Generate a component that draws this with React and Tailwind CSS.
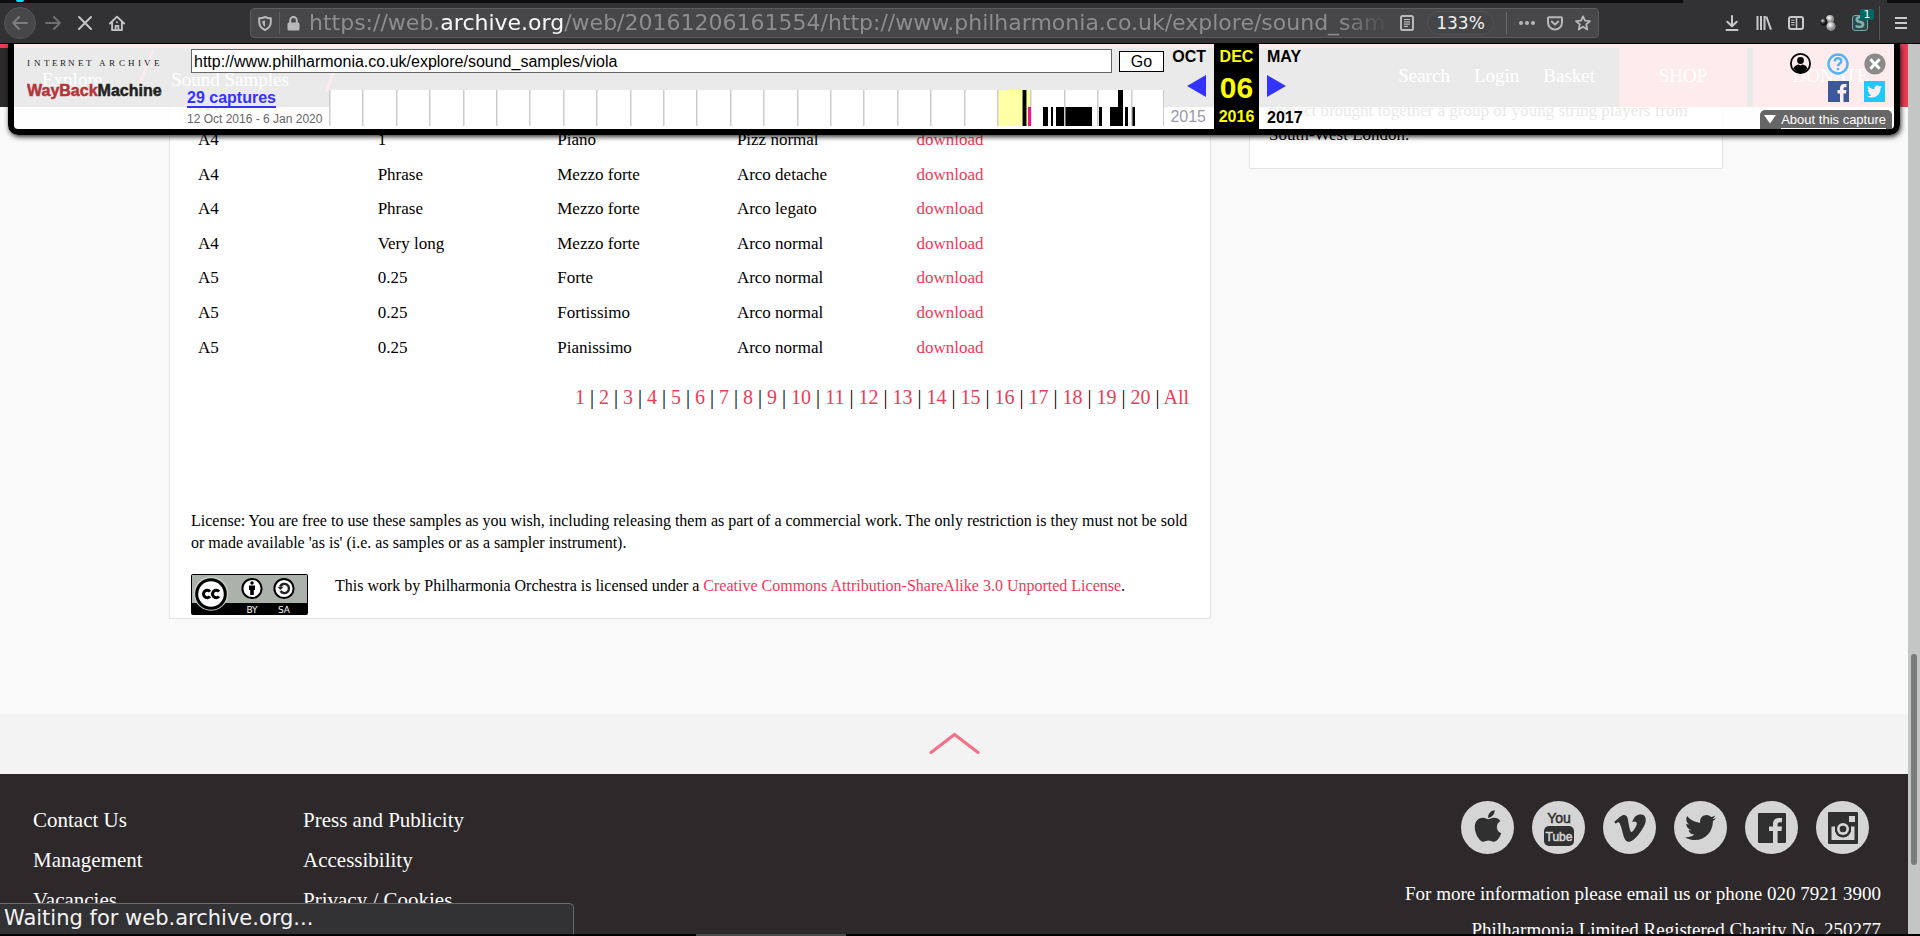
import React from "react";
import { FaApple, FaVimeoV, FaTwitter } from "react-icons/fa";

const rows = [
  ["A4", "", "", "", ""],
  ["A4", "1", "Piano", "Pizz normal", "download"],
  ["A4", "Phrase", "Mezzo forte", "Arco detache", "download"],
  ["A4", "Phrase", "Mezzo forte", "Arco legato", "download"],
  ["A4", "Very long", "Mezzo forte", "Arco normal", "download"],
  ["A5", "0.25", "Forte", "Arco normal", "download"],
  ["A5", "0.25", "Fortissimo", "Arco normal", "download"],
  ["A5", "0.25", "Pianissimo", "Arco normal", "download"],
];

const pages = [...Array.from({ length: 20 }, (_, i) => String(i + 1)), "All"];

function IconButton({ label, className = "", children }) {
  return (
    <button type="button" aria-label={label} className={`flex items-center justify-center ${className}`}>
      {children}
    </button>
  );
}

function BrowserBar() {
  return (
    <div className="relative h-[44px] shrink-0 border-b border-black bg-[#323234] font-['DejaVu_Sans',sans-serif]">
      <div className="flex h-[3px] bg-[#0c0c0d]">
        <span className="ml-4 h-[2px] w-2 rounded-b-full bg-[#00e5f5]" />
        <span className="mr-[33px] ml-auto h-[3px] w-[204px] bg-[#323234]" />
      </div>
      <div className="flex h-10 items-center text-[#b8b8ba]">
        <IconButton label="Back" className="ml-1 size-8 rounded-full border border-[#565658] bg-[#474749] text-[#7d7d7f]">
          <svg width="16" height="14" viewBox="0 0 16 14" fill="none" stroke="currentColor" strokeWidth="2" strokeLinecap="round" strokeLinejoin="round">
            <path d="M15 7H1.500M7 1L1.200 7L7 13" />
          </svg>
        </IconButton>
        <IconButton label="Forward" className="ml-[9px] w-4 text-[#6f6f71]">
          <svg width="16" height="14" viewBox="0 0 16 14" fill="none" stroke="currentColor" strokeWidth="2" strokeLinecap="round" strokeLinejoin="round">
            <path d="M1 7H14.500M9 1L14.800 7L9 13" />
          </svg>
        </IconButton>
        <IconButton label="Stop" className="ml-4 w-4 text-[#c4c4c6]">
          <svg width="16" height="16" viewBox="0 0 16 16" fill="none" stroke="currentColor" strokeWidth="2" strokeLinecap="round">
            <path d="M2 2L14 14M14 2L2 14" />
          </svg>
        </IconButton>
        <IconButton label="Home" className="ml-4 w-4 text-[#c4c4c6]">
          <svg width="17" height="17" viewBox="0 0 17 17" fill="none" stroke="currentColor" strokeWidth="2" strokeLinecap="round" strokeLinejoin="round">
            <path d="M1 8.500L8.500 1.200L16 8.500M3.300 7V15.500H13.700V7" />
            <path d="M7 15V11H10V15" />
            <path d="M8.500 7.200V7.300" />
          </svg>
        </IconButton>

        <div className="ml-[125px] flex h-[30px] w-[1349px] items-center rounded-[4px] border border-[#5c5c5e] bg-[#474749]">
          <svg className="ml-[7px] shrink-0" width="14" height="15" viewBox="0 0 14 15" fill="none" stroke="currentColor" strokeWidth="2" strokeLinejoin="round">
            <path d="M7 1C5 2 3 2.300 1.200 2.300V6C1.200 10 3.500 12.500 7 14C10.500 12.500 12.800 10 12.800 6V2.300C11 2.300 9 2 7 1Z" />
            <path d="M7 4.500V10.800C5 9.500 4.300 8 4.300 5Z" fill="currentColor" stroke="none" />
          </svg>
          <span className="ml-[7px] h-[22px] w-px bg-[#5f5f63]" />
          <svg className="ml-[7px] shrink-0" width="13" height="15" viewBox="0 0 13 15">
            <rect x="0.500" y="6.500" width="12" height="8" rx="1.500" fill="currentColor" />
            <path d="M3.200 7V4.200A3.300 3.300 0 0 1 9.800 4.200V7" fill="none" stroke="currentColor" strokeWidth="2" />
          </svg>
          <div className="ml-[9px] min-w-0 flex-1 overflow-hidden whitespace-nowrap text-[22px] leading-7 text-[#8d8d8f] [mask-image:linear-gradient(to_right,black_calc(100%-48px),transparent)]">
            https://web.<span className="text-[#f9f9fa]">archive.org</span>
            /web/20161206161554/http://www.philharmonia.co.uk/explore/sound_samples/viola
          </div>
          <IconButton label="Reader view" className="ml-3 w-[14px]">
            <svg width="14" height="16" viewBox="0 0 14 16" fill="none" stroke="currentColor" strokeWidth="2">
              <rect x="1" y="1" width="12" height="14" rx="1.500" />
              <path d="M4 4.500H10M4 6.800H10M4 9.100H10M4 11.400H8" strokeWidth="1.200" />
            </svg>
          </IconButton>
          <button type="button" className="ml-[13px] h-6 w-[67px] rounded-full border border-[#555557] bg-[#454547] text-[17px] leading-5 text-[#f0f0f1]">
            133%
          </button>
          <span className="ml-3 h-[22px] w-px bg-[#6a6a6e]" />
          <IconButton label="Page actions" className="ml-3 w-4">
            <svg width="16" height="4" viewBox="0 0 16 4" fill="currentColor">
              <circle cx="2" cy="2" r="2" /><circle cx="8" cy="2" r="2" /><circle cx="14" cy="2" r="2" />
            </svg>
          </IconButton>
          <IconButton label="Save to Pocket" className="ml-3 w-4">
            <svg width="16" height="15" viewBox="0 0 16 15" fill="none" stroke="currentColor" strokeWidth="2" strokeLinecap="round" strokeLinejoin="round">
              <path d="M2 1.200H14A1 1 0 0 1 15 2.200V6.500A7 7 0 0 1 1 6.500V2.200A1 1 0 0 1 2 1.200Z" />
              <path d="M4.800 5.500L8 8.600L11.200 5.500" />
            </svg>
          </IconButton>
          <IconButton label="Bookmark" className="mr-[7px] ml-3 w-4">
            <svg width="16" height="16" viewBox="0 0 16 16" fill="none" stroke="currentColor" strokeWidth="1.800" strokeLinejoin="round">
              <path d="M8 1.300L10 5.700L14.900 6.200L11.200 9.400L12.300 14.500L8 11.800L3.700 14.500L4.800 9.400L1.100 6.200L6 5.700Z" />
            </svg>
          </IconButton>
        </div>

        <div className="ml-auto flex h-10 items-center text-[#c9c9cb]">
          <IconButton label="Downloads" className="w-4">
            <svg width="14" height="16" viewBox="0 0 14 16" fill="none" stroke="currentColor" strokeWidth="2" strokeLinecap="round" strokeLinejoin="round">
              <path d="M7 1V11M2.300 6.700L7 11.300L11.700 6.700M1.500 15H12.500" />
            </svg>
          </IconButton>
          <IconButton label="Library" className="ml-4 w-4">
            <svg width="16" height="14" viewBox="0 0 16 14" fill="none" stroke="currentColor" strokeWidth="2">
              <path d="M1.500 0V14M5 0V14M8.500 0V14M10.300 0.500L15 13.600" />
            </svg>
          </IconButton>
          <IconButton label="Sidebars" className="ml-4 w-4">
            <svg width="16" height="14" viewBox="0 0 16 14" fill="none" stroke="currentColor" strokeWidth="2">
              <rect x="1" y="1" width="14" height="12" rx="2" />
              <path d="M8.500 1V13" strokeWidth="1.500" />
              <path d="M3.200 4.200H6.500M3.200 6.500H6.500M3.200 8.800H6.500" strokeWidth="1" />
            </svg>
          </IconButton>
          <IconButton label="Extension" className="ml-4 w-4">
            <svg width="16" height="16" viewBox="0 0 16 16">
              <defs>
                <radialGradient id="ball" cx="0.400" cy="0.350"><stop offset="0" stopColor="#fff" /><stop offset="1" stopColor="#8a8a8a" /></radialGradient>
                <radialGradient id="dark" cx="0.350" cy="0.350"><stop offset="0" stopColor="#eee" /><stop offset="0.500" stopColor="#555" /><stop offset="1" stopColor="#111" /></radialGradient>
              </defs>
              <circle cx="10" cy="4" r="4" fill="url(#ball)" />
              <circle cx="11" cy="11.300" r="4.600" fill="url(#ball)" />
              <circle cx="3.800" cy="6.800" r="3.600" fill="url(#dark)" />
            </svg>
          </IconButton>
          <div className="relative ml-4 flex h-9 w-4 items-center">
            <button type="button" className="flex size-4 items-center justify-center rounded-[3px] border border-[#6fa9a7] bg-[#2f4a4b] text-[15px] leading-none font-bold text-[#7fb3b0]">
              S
            </button>
            <span className="absolute top-1 left-2 h-[11px] w-[14px] rounded-[2px] bg-[#006766] text-center text-[11px] leading-[11px] text-white">1</span>
          </div>
          <span className="ml-[11px] h-[34px] w-px bg-[#57575a]" />
          <IconButton label="Menu" className="mr-[13px] ml-[15px] w-3">
            <svg width="12" height="12" viewBox="0 0 12 12" stroke="currentColor" strokeWidth="2">
              <path d="M0 1H12M0 6H12M0 11H12" />
            </svg>
          </IconButton>
        </div>
      </div>
    </div>
  );
}

function Slash({ className }) {
  return (
    <svg className={`mt-[2px] shrink-0 self-start ${className}`} width="18" height="42" viewBox="0 0 18 42" stroke="#ec3b57" strokeWidth="3">
      <path d="M17 0L1 42" />
    </svg>
  );
}

function SiteHeader() {
  return (
    <header className="absolute inset-x-0 top-0 h-[63px] border-t-4 border-[#ec3b57] bg-[#2d282a] text-[19px] leading-6 text-white">
      <nav className="flex h-[59px] items-center">
        <a href="#explore" className="mt-1 ml-[42px]">Explore</a>
        <Slash className="ml-[34px]" />
        <a href="#samples" className="mt-1 ml-[17px]">Sound Samples</a>
        <Slash className="ml-9" />
        <div className="-mt-1 ml-auto flex gap-6 pr-6">
          <a href="#search">Search</a>
          <a href="#login">Login</a>
          <a href="#basket">Basket</a>
        </div>
        <a href="#shop" className="h-full w-32 bg-[#ec3b57] pt-4 text-center">SHOP</a>
        <a href="#donate" className="ml-[6px] h-full w-[155px] bg-[#ec3b57] pt-4 text-center">DONATE</a>
      </nav>
    </header>
  );
}

const letters = "INTERNET ARCHIVE".split("");
const slots = [0, 7, 17, 25, 33, 41, 51, 59, 67, 72, 82, 92, 101, 111, 117, 127];

function WaybackLogo() {
  return (
    <a href="#wayback" className="flex w-[173px] shrink-0 flex-col pt-[15px] pl-[13px]" aria-label="Internet Archive Wayback Machine">
      <svg width="140" height="52" viewBox="0 0 140 52">
        <g fontFamily="'Liberation Serif', serif" fontSize="9" fill="#222">
          {letters.map((l, i) => (
            <text key={i} x={slots[i]} y="7">{l}</text>
          ))}
        </g>
        <text y="37" fontFamily="'Liberation Sans', sans-serif" fontWeight="700" fontSize="16" fill="#b5343a" stroke="#b5343a" strokeWidth="0.500">
          WayBack<tspan fill="#222" stroke="#222">Machine</tspan>
        </text>
      </svg>
    </a>
  );
}

const bars = [
  [694, 0, 3, 36], [714, 17, 5, 19], [722, 17, 2, 19], [727, 17, 36, 19],
  [770, 17, 3, 19], [781, 17, 13, 19], [789, 0, 5, 36], [796, 17, 3, 19], [803, 17, 3, 19],
];

function Sparkline() {
  return (
    <svg className="block h-9 min-w-0 flex-1 bg-white" viewBox="0 0 835 36" preserveAspectRatio="none">
      <rect x="668" width="33" height="36" fill="#ffffa5" />
      <rect x="693" width="5" height="36" fill="#8f8f4c" />
      {bars.map(([x, y, w, h]) => (
        <rect key={x} x={x} y={y} width={w} height={h} fill="#000" />
      ))}
      {Array.from({ length: 26 }, (_, i) => (
        <rect key={i} x={Math.min(834, Math.round(i * 33.4))} width={i === 25 ? 1 : 1.5} height="36" fill="#ccc" />
      ))}
      <rect x="699" y="17" width="3" height="19" fill="#f0148c" />
    </svg>
  );
}

function WaybackBar() {
  return (
    <div className="absolute inset-x-2 top-0 flex h-[91px] rounded-b-[10px] border-x-6 border-b-6 border-black bg-white/90 font-['Liberation_Sans',sans-serif] text-base leading-[18px] text-black shadow-[1px_2px_5px_rgba(0,0,0,0.8)]">
      <WaybackLogo />
      <div className="flex min-w-0 flex-1 flex-col">
        <form className="flex h-[46px] items-start gap-[7px] pt-[5px] pl-1" onSubmit={(e) => e.preventDefault()}>
          <input
            aria-label="URL"
            defaultValue="http://www.philharmonia.co.uk/explore/sound_samples/viola"
            className="h-6 min-w-0 flex-1 border border-[#666] bg-white px-[2px] pt-px text-base"
          />
          <button type="submit" className="mt-[2px] h-[21px] w-[45px] border border-black bg-white leading-[18px]">Go</button>
        </form>
        <div className="flex">
          <div className="w-[142px] shrink-0">
            <a href="#captures" className="block w-fit border-b-2 border-[#33f] leading-4 font-bold text-[#33f]">29 captures</a>
            <div className="mt-1 text-[12px] leading-[14px] whitespace-nowrap text-[#666]">12 Oct 2016 - 6 Jan 2020</div>
          </div>
          <Sparkline />
        </div>
      </div>
      <div className="flex w-[50px] shrink-0 flex-col items-end pt-1 pr-2">
        <b>OCT</b>
        <svg className="mt-[9px]" width="19" height="22" viewBox="0 0 19 22"><path d="M0 11L19 0V22Z" fill="#33f" /></svg>
        <span className="mt-[11px] text-[#99a]">2015</span>
      </div>
      <div className="flex w-[45px] shrink-0 flex-col items-center bg-black pt-1 font-bold text-[#ff0]">
        <span>DEC</span>
        <span className="mt-[6px] text-[30px] leading-8">06</span>
        <span className="mt-1">2016</span>
      </div>
      <div className="flex w-[635px] shrink-0">
        <div className="flex flex-col pt-1 pl-2">
          <b>MAY</b>
          <svg className="mt-[9px]" width="19" height="22" viewBox="0 0 19 22"><path d="M19 11L0 0V22Z" fill="#33f" /></svg>
          <b className="mt-3">2017</b>
        </div>
        <div className="ml-auto flex flex-col items-end">
          <div className="grid grid-cols-[repeat(3,22px)] gap-x-[15px] gap-y-[6px] pt-[9px] pr-2">
            <IconButton label="Sign in">
              <svg width="22" height="22" viewBox="0 0 22 22">
                <circle cx="10.500" cy="10.500" r="9.600" fill="none" stroke="#000" strokeWidth="1.800" />
                <circle cx="10.500" cy="7.500" r="3.400" />
                <path d="M3.600 15.500C4 13 6.500 12 8.500 11.500L10.500 12.500L12.500 11.500C14.500 12 17 13 17.400 15.500C15.500 18.500 13 20 10.500 20S5.500 18.500 3.600 15.500Z" />
              </svg>
            </IconButton>
            <IconButton label="Help">
              <svg width="22" height="22" viewBox="0 0 22 22" fill="none" stroke="#52b4f4" strokeWidth="2.400">
                <circle cx="11" cy="11" r="9.500" />
                <path d="M7.800 8.600C7.800 6.300 9.200 5.300 11 5.300S14.300 6.400 14.300 8.200C14.300 10.500 11 10.600 11 13.300M11 15V17.300" />
              </svg>
            </IconButton>
            <IconButton label="Close">
              <svg width="22" height="22" viewBox="0 0 22 22">
                <circle cx="11" cy="11" r="10.600" fill="#8a8a8a" />
                <path d="M6.300 6.300L15.700 15.700M15.700 6.300L6.300 15.700" stroke="#fff" strokeWidth="3" />
              </svg>
            </IconButton>
            <a href="#facebook" aria-label="Facebook" className="col-start-2">
              <svg width="22" height="21" viewBox="0 0 22 21">
                <rect x="1" width="21" height="21" fill="#3b5998" />
                <path d="M13 21V12.500H10.500V9H13V7C13 4.300 14.600 3 17 3H19.500V6.200H18C16.800 6.200 16.500 6.700 16.500 7.600V9H19.400L19 12.500H16.500V21Z" fill="#ffeef0" />
              </svg>
            </a>
            <a href="#twitter" aria-label="Twitter" className="flex h-[21px] w-[21px] items-center justify-center bg-[#1dcaff] text-[#ffeef0]">
              <FaTwitter size={15} />
            </a>
          </div>
          <a href="#about" className="mt-[8px] mr-[2px] flex h-[19px] items-center gap-[5px] rounded-t-[5px] bg-[#666] pr-[6px] pl-1 text-[13px] leading-[17px] text-white">
            <svg width="12" height="9" viewBox="0 0 12 9"><path d="M0 0H12L6 8.500Z" fill="#fff" /></svg>
            <span className="border-b border-white">About this capture</span>
          </a>
        </div>
      </div>
    </div>
  );
}

function CcBadge() {
  return (
    <svg className="shrink-0" width="117" height="41" viewBox="0 0 117 41" role="img" aria-label="Creative Commons BY SA">
      <rect width="117" height="41" rx="2" fill="#000" />
      <rect x="1" y="1" width="115" height="28" fill="#aab2ab" />
      <circle cx="20" cy="20" r="17.500" fill="#c6ccc6" />
      <path d="M1 29H5.500A17.500 17.500 0 0 0 34.500 29H40V40H1Z" fill="#000" />
      <circle cx="20" cy="20" r="14.300" fill="#fff" stroke="#000" strokeWidth="3" />
      <g fill="none" stroke="#000" strokeWidth="3">
        <path d="M19 17.600A3.700 3.700 0 1 0 19 22.400" />
        <path d="M28 17.600A3.700 3.700 0 1 0 28 22.400" />
      </g>
      <circle cx="61" cy="14.500" r="9.600" fill="#fff" stroke="#000" strokeWidth="2" />
      <circle cx="61" cy="9" r="1.700" />
      <path d="M58 11.500H64V16H62.800V21H59.200V16H58Z" />
      <circle cx="93" cy="14.500" r="9.600" fill="#fff" stroke="#000" strokeWidth="2" />
      <path d="M89.200 12.500A4.600 4.600 0 1 1 89.500 17" fill="none" stroke="#222" strokeWidth="2.400" />
      <path d="M86.500 12.800H92.500L89.400 16Z" fill="#222" />
      <g fontFamily="'DejaVu Sans', sans-serif" fontSize="9" fill="#fff" textAnchor="middle">
        <text x="61" y="38.500">BY</text>
        <text x="93" y="38.500">SA</text>
      </g>
    </svg>
  );
}

function Social({ label, children }) {
  return (
    <a href="#social" aria-label={label} className="flex size-[53px] items-center justify-center rounded-full bg-[#d5d5d5] text-[#303031]">
      {children}
    </a>
  );
}

function Footer() {
  return (
    <footer className="flex flex-1 justify-between bg-[#2d282a] pt-[26px] pr-[27px] pl-[33px] text-white">
      <div className="flex text-[21px] leading-10">
        <ul className="w-[270px]">
          {["Contact Us", "Management", "Vacancies"].map((t) => (
            <li key={t}><a href="#footer">{t}</a></li>
          ))}
        </ul>
        <ul>
          {["Press and Publicity", "Accessibility", "Privacy / Cookies"].map((t) => (
            <li key={t}><a href="#footer">{t}</a></li>
          ))}
        </ul>
      </div>
      <div className="flex flex-col items-end pt-px text-[19px] leading-9">
        <div className="mb-[22px] flex gap-[18px] pr-3">
          <Social label="Apple"><FaApple size={36} className="-mt-1" /></Social>
          <Social label="YouTube">
            <svg width="53" height="53" viewBox="0 0 53 53">
              <g fontFamily="'Liberation Sans', sans-serif" textAnchor="middle">
                <text x="27" y="22" fontSize="14" fill="#303031" stroke="#303031" strokeWidth="0.500">You</text>
                <rect x="12" y="25" width="30" height="20" rx="5" fill="#303031" />
                <text x="27" y="40" fontSize="12" fill="#d5d5d5" stroke="#d5d5d5" strokeWidth="0.500">Tube</text>
              </g>
            </svg>
          </Social>
          <Social label="Vimeo"><FaVimeoV size={36} /></Social>
          <Social label="Twitter"><FaTwitter size={31} /></Social>
          <Social label="Facebook">
            <svg width="28" height="30" viewBox="0 0 28 30">
              <rect width="28" height="30" rx="1" fill="#303031" />
              <path d="M15 30V18H11V13.500H15V11C15 7 17.500 5 21 5H24V9.300H22C20 9.300 19.600 10.200 19.600 11.600V13.500H24L23.500 18H19.600V30Z" fill="#d5d5d5" />
            </svg>
          </Social>
          <Social label="Instagram">
            <svg width="30" height="32" viewBox="0 0 30 32">
              <rect width="30" height="32" rx="1" fill="#303031" />
              <rect x="21" y="4" width="6" height="6" fill="#d5d5d5" />
              <path d="M3.500 14.500H7V28H3.500ZM23 14.500H26.500V28H23ZM3.500 20H26.500V28H3.500Z" fill="#d5d5d5" />
              <circle cx="15" cy="17.500" r="8" fill="#303031" />
              <circle cx="15" cy="17" r="6" fill="#d5d5d5" />
              <circle cx="15" cy="17" r="3.300" fill="#303031" />
            </svg>
          </Social>
        </div>
        <p>For more information please email us or phone 020 7921 3900</p>
        <p>Philharmonia Limited Registered Charity No. 250277</p>
      </div>
    </footer>
  );
}

export default function App() {
  return (
    <div className="flex h-screen flex-col overflow-hidden bg-black font-['Liberation_Serif',serif] text-black">
      <BrowserBar />
      <div className="relative flex min-h-0 flex-1">
        <div className="relative flex min-w-0 flex-1 flex-col overflow-hidden bg-[#f9f9f9]">
          <main className="mb-[95px] flex items-start gap-[38px] pr-[185px] pl-[169px]">
            <section className="min-w-0 flex-1 border-x border-b border-[#e5e5e5] bg-white px-[21px] pt-11 pb-[3px]">
              <table className="h-[277px] w-[90%] table-fixed text-[17px] leading-5">
                <tbody>
                  {rows.map((r, i) => (
                    <tr key={i}>
                      {r.map((c, j) => (
                        <td key={j} className="p-0 pl-[7px]">
                          {c === "download" ? <a href="#download" className="text-[#ec3b57]">{c}</a> : c}
                        </td>
                      ))}
                    </tr>
                  ))}
                </tbody>
              </table>
              <nav aria-label="Pages" className="mt-5 text-right text-[20px] leading-6">
                {pages.map((p, i) => (
                  <React.Fragment key={p}>
                    {i > 0 && " | "}
                    <a href="#page" className="text-[#ec3b57]">{p}</a>
                  </React.Fragment>
                ))}
              </nav>
              <p className="mt-[101px] text-base leading-[22px]">
                License: You are free to use these samples as you wish, including releasing them as part of a commercial work. The only restriction is they must not be sold or made available 'as is' (i.e. as samples or as a sampler instrument).
              </p>
              <div className="mt-5 flex gap-[27px]">
                <CcBadge />
                <p className="pt-px text-base leading-[22px]">
                  This work by Philharmonia Orchestra is licensed under a{" "}
                  <a href="#license" className="text-[#ec3b57]">Creative Commons Attribution-ShareAlike 3.0 Unported License</a>.
                </p>
              </div>
            </section>
            <aside className="w-[474px] shrink-0 border-x border-b border-[#e5e5e5] bg-white px-[19px] pt-[55px] pb-[21px] text-[17px] leading-6">
              project brought together a group of young string players from South-West London.
            </aside>
          </main>
          <a href="#top" aria-label="Back to top" className="flex h-15 shrink-0 items-start justify-center bg-[#f3f3f3] pt-[18px]">
            <svg width="51" height="23" viewBox="0 0 51 23" fill="none" stroke="#f37088" strokeWidth="3" strokeLinecap="round">
              <path d="M2 20.500L25.500 2.500L49 20.500" />
            </svg>
          </a>
          <Footer />
          <SiteHeader />
          <WaybackBar />
          <div role="status" className="absolute bottom-0 left-0 h-[31px] w-[574px] rounded-tr-[5px] border-t border-r border-[#6a6a6c] bg-[#323234] pl-1 font-['DejaVu_Sans',sans-serif] text-[21px] leading-[29px] text-[#f4f4f5]">
            Waiting for web.archive.org...
          </div>
        </div>
        <div className="flex w-3 shrink-0 flex-col bg-[#c4c6c6] pl-[3px]">
          <div className="mt-[610px] h-[211px] w-[6px] rounded-full bg-[#7a7c7c]" />
        </div>
      </div>
      <div className="h-[2px] shrink-0 bg-black pl-[696px]">
        <div className="h-full w-[150px] bg-[#4a4a4a]" />
      </div>
    </div>
  );
}
